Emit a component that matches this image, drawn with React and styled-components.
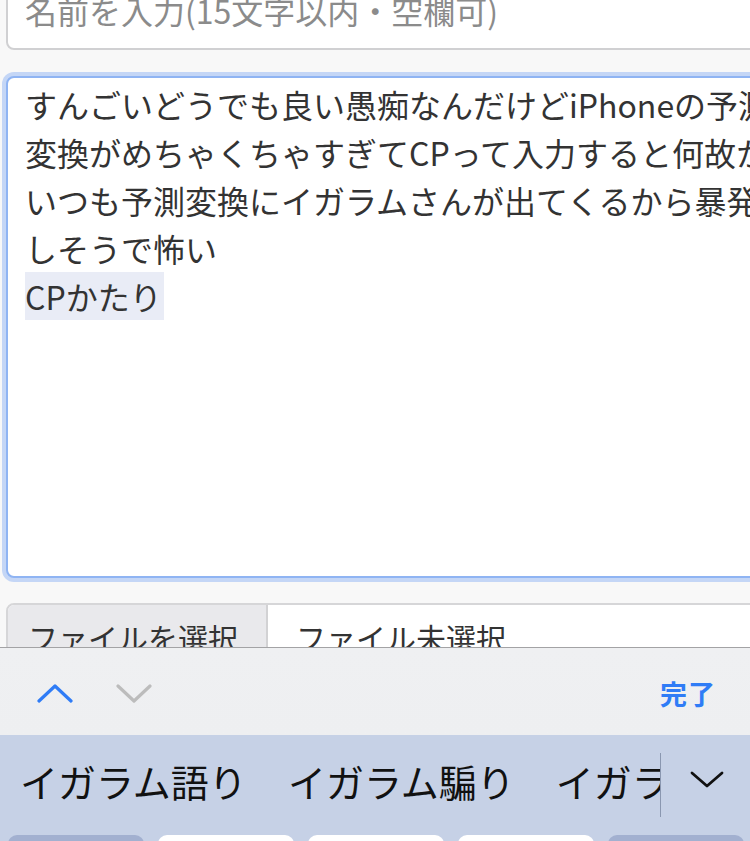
import React from "react";
import styled, { createGlobalStyle } from "styled-components";

const GlobalStyle = createGlobalStyle`
  html, body { margin: 0; padding: 0; }
  body {
    background: #f8f8f8;
    overflow: hidden;
    font-family: "Noto Sans CJK JP", "Noto Sans", sans-serif;
  }
`;

const Page = styled.div`
  width: 750px;
  height: 841px;
  overflow: hidden;
  display: flex;
  flex-direction: column;
  background: #f8f8f8;
`;

const FormArea = styled.div`
  height: 647px;
  overflow: hidden;
  padding-left: 6px;
  display: flex;
  flex-direction: column;
  flex-shrink: 0;
`;

const NameInput = styled.div`
  margin-top: -32px;
  height: 82px;
  width: 900px;
  box-sizing: border-box;
  border: 2px solid #d0d0d2;
  border-radius: 8px;
  background: #fff;
  display: flex;
  align-items: center;
  padding: 2px 0 0 17px;
  font-size: 32px;
  color: #8b8b8b;
  white-space: nowrap;
  flex-shrink: 0;
`;

const TextArea = styled.div`
  margin-top: 26px;
  height: 502px;
  width: 900px;
  box-sizing: border-box;
  border: 2px solid #8fb4f3;
  border-radius: 8px;
  box-shadow: 0 0 0 4px #c4d6f6;
  background: #fff;
  padding: 2px 0 0 17px;
  font-size: 32px;
  line-height: 48px;
  color: #333;
  flex-shrink: 0;
`;

const Line = styled.div`
  white-space: nowrap;
  height: 48px;
`;

const Marked = styled.span`
  background: #e9ecf6;
  display: inline-block;
  padding-right: 2px;
`;

const FileInput = styled.div`
  margin-top: 25px;
  width: 900px;
  height: 80px;
  box-sizing: border-box;
  border: 2px solid #d6d6d8;
  border-radius: 8px;
  background: #fff;
  display: flex;
  overflow: hidden;
  flex-shrink: 0;
`;

const FileButton = styled.div`
  width: 260px;
  background: #e9e9ec;
  border-right: 2px solid #d2d2d4;
  font-size: 30px;
  color: #333;
  padding: 10px 0 0 20px;
  box-sizing: border-box;
  white-space: nowrap;
`;

const FileName = styled.div`
  font-size: 30px;
  color: #333;
  padding: 10px 0 0 28px;
  white-space: nowrap;
`;

const Toolbar = styled.div`
  height: 88px;
  flex-shrink: 0;
  box-sizing: border-box;
  border-top: 1.5px solid #a3a3a5;
  background: linear-gradient(#eff0f2, #eeeff1);
  display: flex;
  align-items: center;
  padding: 4px 34px 0 37px;
`;

const NavGroup = styled.div`
  display: flex;
  align-items: center;
  gap: 43px;
`;

const Done = styled.div`
  margin-left: auto;
  font-size: 27px;
  font-weight: 700;
  color: #2f7cf6;
  letter-spacing: 1px;
`;

const Keyboard = styled.div`
  flex: 1;
  background: #c6d1e6;
  display: flex;
  flex-direction: column;
`;

const CandidateBar = styled.div`
  height: 100px;
  display: flex;
  align-items: center;
`;

const Candidates = styled.div`
  width: 661px;
  height: 64px;
  overflow: hidden;
  display: flex;
  align-items: center;
  gap: 41px;
  padding-left: 20px;
  box-sizing: border-box;
  border-right: 1.5px solid #8a97b0;
  white-space: nowrap;
  font-size: 38px;
  line-height: 1;
  color: #111;
  flex-shrink: 0;
`;

const Candidate = styled.span`
  flex-shrink: 0;
  margin-top: -8px;
`;

const Expand = styled.div`
  flex: 1;
  display: flex;
  justify-content: center;
  padding-left: 2px;
  margin-top: -12px;
`;

const KeyRow = styled.div`
  display: flex;
  gap: 14px;
  padding-left: 8px;
`;

const Key = styled.div`
  width: 136px;
  height: 60px;
  border-radius: 9px;
  background: ${(p) => (p.$dark ? "#a2b0d0" : "#ffffff")};
  flex-shrink: 0;
`;

const Chevron = ({ up, color, width = 36, height = 19, stroke = 3.2 }) => (
  <svg width={width} height={height} viewBox={`0 0 ${width} ${height}`} fill="none">
    <path
      d={
        up
          ? `M2 ${height - 2} L${width / 2} 2 L${width - 2} ${height - 2}`
          : `M2 2 L${width / 2} ${height - 2} L${width - 2} 2`
      }
      stroke={color}
      strokeWidth={stroke}
      strokeLinecap="round"
      strokeLinejoin="round"
    />
  </svg>
);

export default function App() {
  return (
    <>
      <GlobalStyle />
      <Page>
        <FormArea>
          <NameInput>名前を入力(15文字以内・空欄可)</NameInput>
          <TextArea>
            <Line>すんごいどうでも良い愚痴なんだけどiPhoneの予測</Line>
            <Line>変換がめちゃくちゃすぎてCPって入力すると何故か</Line>
            <Line>いつも予測変換にイガラムさんが出てくるから暴発</Line>
            <Line>しそうで怖い</Line>
            <Line>
              <Marked>CPかたり</Marked>
            </Line>
          </TextArea>
          <FileInput>
            <FileButton>ファイルを選択</FileButton>
            <FileName>ファイル未選択</FileName>
          </FileInput>
        </FormArea>
        <Toolbar>
          <NavGroup>
            <Chevron up color="#2f7cf6" />
            <Chevron color="#bcbcbc" />
          </NavGroup>
          <Done>完了</Done>
        </Toolbar>
        <Keyboard>
          <CandidateBar>
            <Candidates>
              <Candidate>イガラム語り</Candidate>
              <Candidate>イガラム騙り</Candidate>
              <Candidate>イガラム</Candidate>
            </Candidates>
            <Expand>
              <Chevron color="#111" width={34} height={17} stroke={2.8} />
            </Expand>
          </CandidateBar>
          <KeyRow>
            <Key $dark />
            <Key />
            <Key />
            <Key />
            <Key $dark />
          </KeyRow>
        </Keyboard>
      </Page>
    </>
  );
}
